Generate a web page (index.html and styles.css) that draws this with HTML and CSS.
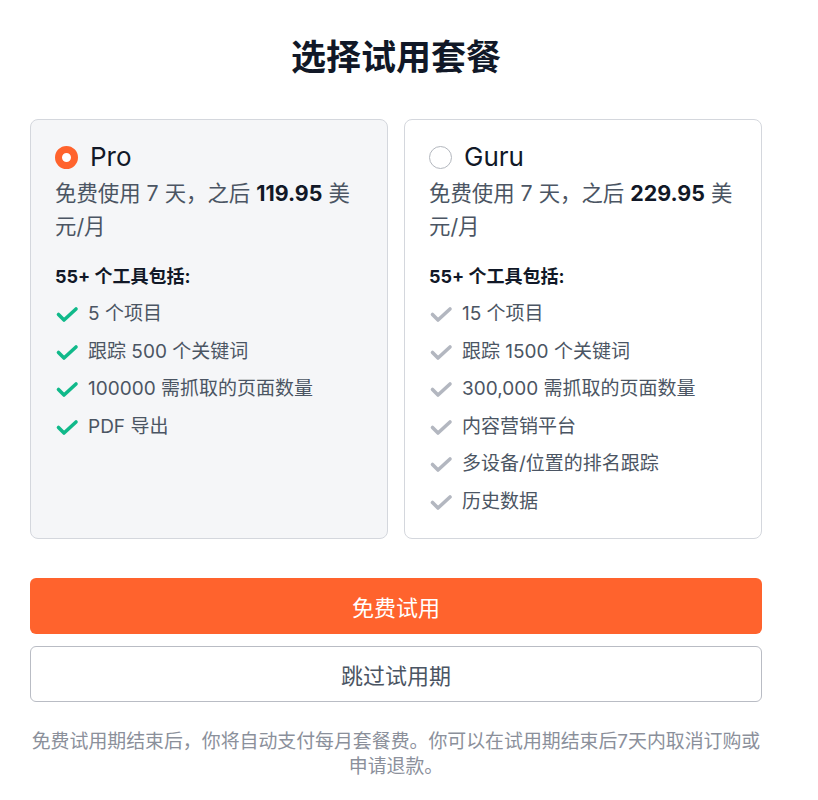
FILE: index.html
```html
<!DOCTYPE html>
<html lang="zh-CN">
<head>
  <meta charset="utf-8">
  <link rel="stylesheet" href="styles.css">
</head>
<body>
  <div class="page">
    <h1 class="title">选择试用套餐</h1>

    <div class="plans">
      <div class="plan plan-selected">
        <div class="plan-header">
          <span class="radio radio-on"></span>
          <span class="plan-name">Pro</span>
        </div>
        <p class="plan-price">免费使用 7 天，之后 <strong>119.95</strong> 美元/月</p>
        <div class="plan-tools">55+ 个工具包括:</div>
        <ul class="features">
          <li><svg class="check" viewBox="0 0 24 24"><path d="M3.5 12.5l5.5 5.5L21 7"/></svg>5 个项目</li>
          <li><svg class="check" viewBox="0 0 24 24"><path d="M3.5 12.5l5.5 5.5L21 7"/></svg>跟踪 500 个关键词</li>
          <li><svg class="check" viewBox="0 0 24 24"><path d="M3.5 12.5l5.5 5.5L21 7"/></svg>100000 需抓取的页面数量</li>
          <li><svg class="check" viewBox="0 0 24 24"><path d="M3.5 12.5l5.5 5.5L21 7"/></svg>PDF 导出</li>
        </ul>
      </div>

      <div class="plan">
        <div class="plan-header">
          <span class="radio"></span>
          <span class="plan-name">Guru</span>
        </div>
        <p class="plan-price">免费使用 7 天，之后 <strong>229.95</strong> 美元/月</p>
        <div class="plan-tools">55+ 个工具包括:</div>
        <ul class="features features-muted">
          <li><svg class="check" viewBox="0 0 24 24"><path d="M3.5 12.5l5.5 5.5L21 7"/></svg>15 个项目</li>
          <li><svg class="check" viewBox="0 0 24 24"><path d="M3.5 12.5l5.5 5.5L21 7"/></svg>跟踪 1500 个关键词</li>
          <li><svg class="check" viewBox="0 0 24 24"><path d="M3.5 12.5l5.5 5.5L21 7"/></svg>300,000 需抓取的页面数量</li>
          <li><svg class="check" viewBox="0 0 24 24"><path d="M3.5 12.5l5.5 5.5L21 7"/></svg>内容营销平台</li>
          <li><svg class="check" viewBox="0 0 24 24"><path d="M3.5 12.5l5.5 5.5L21 7"/></svg>多设备/位置的排名跟踪</li>
          <li><svg class="check" viewBox="0 0 24 24"><path d="M3.5 12.5l5.5 5.5L21 7"/></svg>历史数据</li>
        </ul>
      </div>
    </div>

    <button class="btn btn-primary">免费试用</button>
    <button class="btn btn-outline">跳过试用期</button>

    <p class="note">免费试用期结束后，你将自动支付每月套餐费。你可以在试用期结束后7天内取消订购或申请退款。</p>
  </div>
</body>
</html>
```

FILE: styles.css
```css
body {
  margin: 0;
  background: #fff;
  font-family: Inter, "Noto Sans CJK SC", sans-serif;
  color: #111827;
}

.page {
  width: 732px;
  margin-left: 30px;
  padding-top: 33px;
}

.title {
  margin: 0 0 38px;
  font-size: 35px;
  line-height: 48px;
  font-weight: 700;
  text-align: center;
  color: #111827;
}

.plans {
  display: grid;
  grid-template-columns: 1fr 1fr;
  gap: 16px;
}

.plan {
  background: #fff;
  border: 1px solid #d4d7dd;
  border-radius: 8px;
  padding: 21px 24px 22px;
}

.plan-selected {
  background: #f5f6f8;
}

.plan-header {
  display: flex;
  align-items: center;
  gap: 12px;
  height: 32px;
}

.radio {
  width: 23px;
  height: 23px;
  border: 1px solid #b3b7be;
  border-radius: 50%;
  box-sizing: border-box;
  background: #fff;
}

.radio-on {
  border: 7.5px solid #ff632d;
  background: #fff;
}

.plan-name {
  font-size: 26px;
  line-height: 32px;
  color: #111827;
}

.plan-price {
  margin: 4px 0 0;
  font-size: 21.4px;
  line-height: 33px;
  color: #4b5563;
}

.plan-price strong {
  color: #111827;
  font-weight: 700;
}

.plan-tools {
  margin-top: 20px;
  font-size: 18px;
  line-height: 28px;
  font-weight: 700;
  color: #111827;
}

.features {
  list-style: none;
  margin: 9px 0 0;
  padding: 0;
  display: flex;
  flex-direction: column;
  gap: 9.6px;
}

.features li {
  display: flex;
  align-items: center;
  gap: 9px;
  font-size: 19px;
  line-height: 28px;
  color: #4b5563;
}

.check {
  width: 24px;
  height: 24px;
  flex-shrink: 0;
  fill: none;
  stroke: #10b98a;
  stroke-width: 3.6;
  stroke-linecap: round;
  stroke-linejoin: round;
}

.features-muted .check {
  stroke: #b3b7c0;
}

.btn {
  display: block;
  width: 100%;
  height: 56px;
  border-radius: 6px;
  font-family: inherit;
  font-size: 22px;
  cursor: pointer;
}

.btn-primary {
  margin-top: 39px;
  background: #ff632d;
  border: none;
  color: #fff;
}

.btn-outline {
  margin-top: 12px;
  background: #fff;
  border: 1px solid #b9bcc4;
  color: #4b5563;
}

.note {
  margin: 27px 0 0;
  font-size: 18.9px;
  line-height: 25px;
  text-align: center;
  color: #8b909b;
}
```
